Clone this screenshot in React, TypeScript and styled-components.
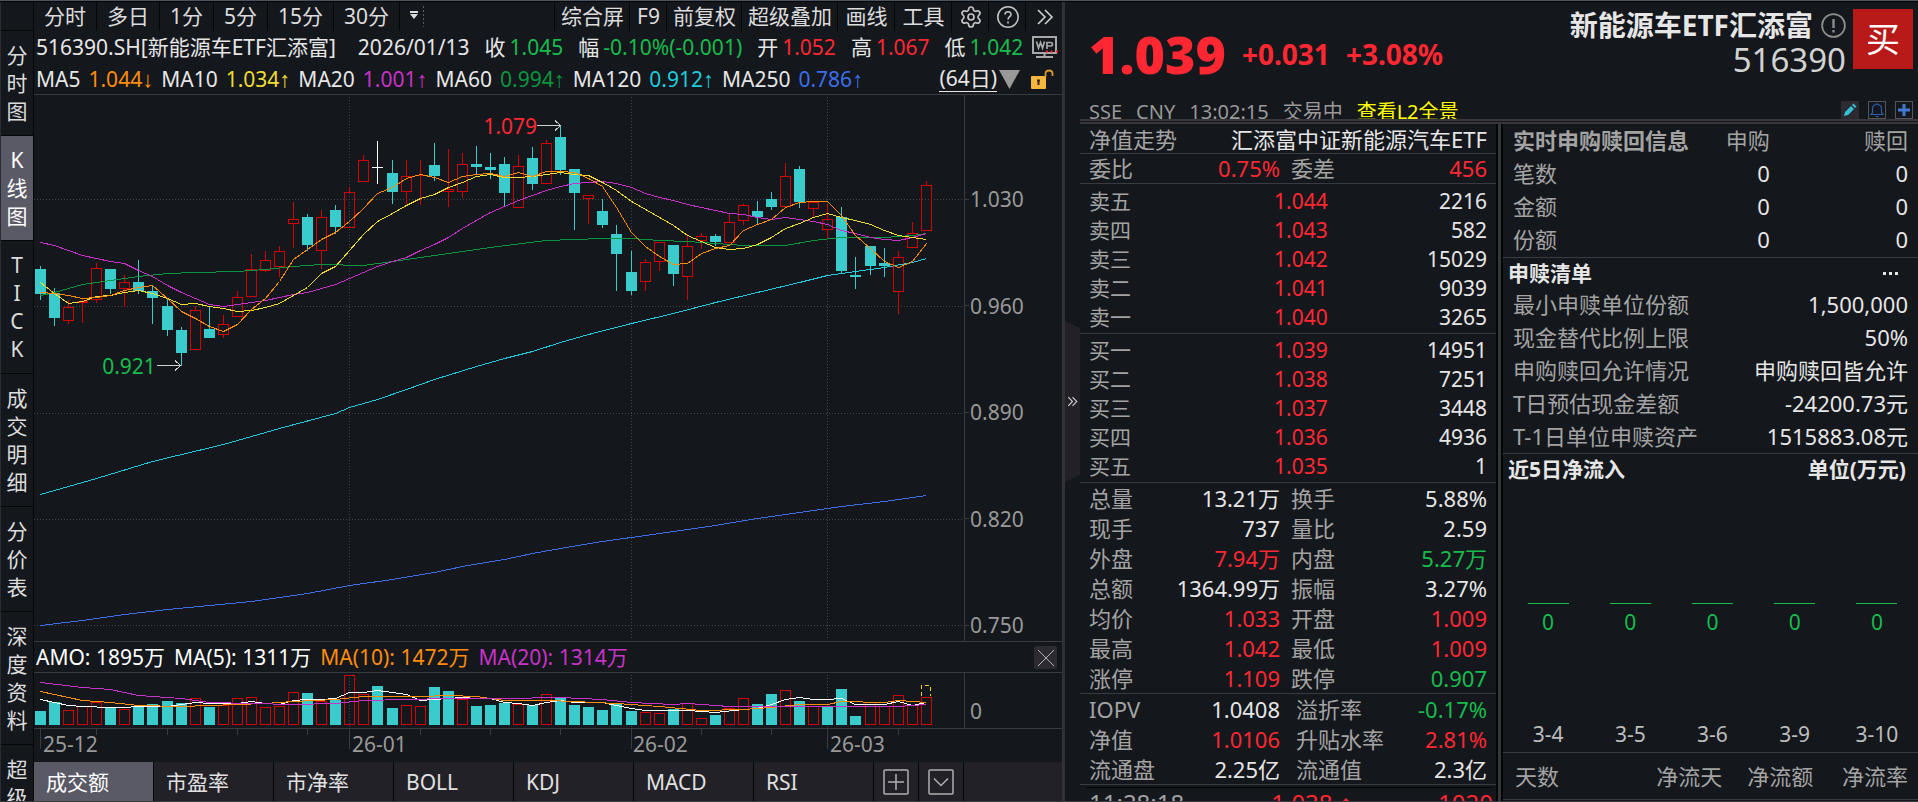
import React from 'react';
import styled, { createGlobalStyle, css } from 'styled-components';
import { Settings } from 'lucide-react';

const c = {
  bg: '#14171c',
  raised: '#232128',
  active: '#5a5966',
  line: '#3a3b40',
  black: '#050608',
  text: '#e6e6e6',
  muted: '#a3a3a3',
  dim: '#999999',
  red: '#ff2832',
  green: '#17bd4c',
  candleRed: '#d40000',
  cyan: '#3acccc',
  orange: '#ff8c0a',
  yellow: '#f0dc32',
  purple: '#c832c8',
  darkGreen: '#0a9640',
  aqua: '#1fcbdc',
  blue: '#3c6eec',
};

const GlobalStyle = createGlobalStyle`
  * { box-sizing: border-box; }
  body {
    margin: 0;
    background: ${c.bg};
    color: ${c.text};
    font: 400 21px/28px "Noto Sans", "Noto Sans CJK SC", sans-serif;
  }
  button, a { font: inherit; color: inherit; }
  button { margin: 0; padding: 0; border: 0; background: none; cursor: pointer; white-space: nowrap; }
  table { border-collapse: collapse; table-layout: fixed; width: 100%; }
  th, td { padding: 0; font-weight: 400; white-space: nowrap; }
  th { text-align: left; }
  h2 { margin: 0; font-size: inherit; }
`;

/* ---------- page frame ---------- */

const Page = styled.div`
  display: flex;
  flex-direction: column;
  height: 100vh;
  overflow: hidden;
  border-bottom: 1px solid ${c.line};
`;

const TopEdge = styled.div`
  flex: none;
  height: 2px;
  background: #4c555f;
  border-bottom: 1px solid ${c.black};
`;

const Workspace = styled.div`
  flex: 1;
  min-height: 0;
  display: grid;
  grid-template-columns: minmax(0, 1062fr) 18px minmax(0, 838fr);
  grid-template-rows: minmax(0, 1fr);
`;

const ChartSide = styled.main`
  display: grid;
  grid-template-columns: 34px minmax(0, 1fr);
  grid-template-rows: minmax(0, 1fr);
`;

const Nav = styled.nav`
  display: flex;
  flex-direction: column;
  overflow: hidden;
  padding-top: 28px;
  border-left: 1px solid #2a2c31;
  border-right: 1px solid ${c.black};
`;

const NavItem = styled.button<{ $active?: boolean }>`
  flex: none;
  display: flex;
  flex-direction: column;
  align-items: center;
  padding: 10px 0;
  border-top: 1px solid ${c.black};
  color: ${p => (p.$active ? '#ffffff' : '#dcdcdc')};
  background: ${p => (p.$active ? c.active : c.bg)};
`;

const ChartColumn = styled.div`
  display: flex;
  flex-direction: column;
  min-width: 0;
`;

/* ---------- toolbar ---------- */

const Toolbar = styled.div`
  flex: none;
  display: flex;
  height: 29px;
  color: #dcdcdc;
`;

const ToolGap = styled.div`
  flex: 1;
`;

const PeriodButton = styled.button`
  padding: 0 10px;
  border-right: 1px solid ${c.black};
  line-height: 27px;
`;

const ToolButton = styled.button<{ $wide?: boolean }>`
  min-width: ${p => (p.$wide ? 57 : 37)}px;
  padding: 0 5px 0 6px;
  border-left: 1px solid ${c.black};
  line-height: 27px;
  svg { display: block; margin: 0 auto; }
`;

const MoreButton = styled.button`
  padding: 0 0 2px 10px;
  svg { display: block; }
`;

/* ---------- readouts ---------- */

const InfoRow = styled.div`
  flex: none;
  display: flex;
  align-items: center;
  gap: 15px;
  height: 32px;
  padding: 0 4px 0 2px;
  white-space: nowrap;
  overflow: hidden;
`;

const AverageRow = styled(InfoRow)`
  gap: 8px;
  padding-top: 1px;
  padding-right: 8px;
  border-bottom: 1px solid ${c.line};
`;

const Security = styled.span`
  margin-right: 7px;
`;

const Value = styled.span<{ $color?: string }>`
  color: ${p => p.$color || c.text};
`;

const Readout = styled.span`
  display: flex;
  gap: 4px;
`;

const Average = styled.span`
  display: flex;
  gap: 8px;
`;

const Arrow = styled.span`
  font-family: "Liberation Sans", sans-serif;
  font-size: 22px;
`;

const RowEnd = styled.span`
  display: flex;
  align-items: center;
  gap: 2px;
  margin-left: auto;
`;

const DaysButton = styled.button`
  height: 26px;
  line-height: 25px;
  border-bottom: 1px solid ${c.text};
`;

const LockButton = styled.button`
  margin-left: 9px;
  svg { display: block; }
`;

const IconButton = styled.button`
  margin-left: -6px;
  svg { display: block; }
`;

/* ---------- chart ---------- */

const PlotArea = styled.section<{ $grow?: boolean }>`
  display: grid;
  grid-template-columns: minmax(0, 1fr) 98px;
  grid-template-rows: minmax(0, 1fr);
  ${p => (p.$grow ? css`flex: 1; min-height: 0;` : css`flex: none; height: 55px;`)}
`;

const Canvas = styled.div`
  position: relative;
  min-width: 0;
  svg { display: block; width: 100%; height: 100%; }
`;

const Extreme = styled.span<{ $right: string; $top: string; $color: string }>`
  position: absolute;
  right: ${p => p.$right};
  top: ${p => p.$top};
  margin-top: -14px;
  color: ${p => p.$color};
`;

const PriceAxis = styled.div`
  display: flex;
  flex-direction: column;
  justify-content: space-between;
  padding: 90px 0 2px;
  border-left: 1px solid ${c.line};
  color: ${c.dim};
`;

const PriceTick = styled.div`
  display: flex;
  align-items: center;
  gap: 1px;
  &::before { content: ''; width: 4px; height: 1px; background: ${c.line}; }
`;

const AmountAxis = styled.div`
  display: flex;
  align-items: center;
  padding: 20px 0 0 5px;
  border-left: 1px solid ${c.line};
  color: ${c.dim};
`;

const AmountBar = styled.div`
  flex: none;
  display: flex;
  align-items: center;
  gap: 9px;
  height: 32px;
  padding: 0 5px 0 2px;
  border: solid ${c.line};
  border-width: 1px 0;
  color: #ffffff;
  white-space: nowrap;
`;

const CloseButton = styled.button`
  width: 23px;
  height: 23px;
  margin-left: auto;
  border-radius: 2px;
  background: #2c2b31;
  svg { display: block; }
`;

const TimeAxis = styled.div`
  flex: none;
  height: 34px;
  border-top: 1px solid ${c.line};
  color: ${c.dim};
`;

const TimeTicks = styled.div`
  height: 20px;
  margin: 0 98px -20px 0;
  svg { display: block; width: 100%; height: 20px; }
`;

const TimeLabels = styled.div`
  display: grid;
  grid-template-columns: 309fr 281fr 197fr 232fr;
  padding: 1px 0 0 9px;
`;

const Tabs = styled.div`
  flex: none;
  display: flex;
  height: 39px;
  background: ${c.raised};
`;

const Tab = styled.button<{ $active?: boolean }>`
  flex: 0 1 120px;
  padding: 0 12px;
  border-right: 1px solid ${c.black};
  text-align: left;
  background: ${p => (p.$active ? c.active : 'transparent')};
  color: ${p => (p.$active ? '#ffffff' : '#e0e0e0')};
`;

const TabTool = styled.button`
  width: 45px;
  border-right: 1px solid ${c.black};
  svg { display: block; margin: 0 auto; }
`;

/* ---------- splitter ---------- */

const Splitter = styled.div`
  display: flex;
  align-items: center;
  border-left: 3px solid #313136;
`;

const Collapse = styled.button`
  width: 15px;
  height: 161px;
  background: ${c.raised};
  clip-path: polygon(0 0, 100% 7px, 100% 154px, 0 100%);
  svg { display: block; margin: 0 auto; }
`;

/* ---------- quote side ---------- */

const QuoteSide = styled.aside`
  display: flex;
  flex-direction: column;
  min-width: 0;
`;

const QuoteHead = styled.header`
  flex: none;
  display: flex;
  justify-content: space-between;
  height: 122px;
  overflow: hidden;
  border-bottom: 5px double #36363b;
  white-space: nowrap;
`;

const HeadLeft = styled.div`
  display: flex;
  flex-direction: column;
  justify-content: space-between;
  height: 124px;
  padding: 23px 0 0 9px;
`;

const PriceLine = styled.div`
  display: flex;
  align-items: center;
  gap: 16px;
  color: ${c.red};
  font-size: 28px;
  font-weight: 700;
`;

const Price = styled.strong`
  font-size: 52px;
  line-height: 58px;
`;

const StatusLine = styled.div`
  display: flex;
  gap: 14px;
  color: ${c.dim};
  font-size: 20px;
`;

const DepthLink = styled.a`
  color: #ffff00;
  text-decoration: none;
`;

const HeadRight = styled.div`
  display: flex;
  flex-direction: column;
  align-items: flex-end;
  justify-content: space-between;
  padding: 7px 5px 0 0;
`;

const Identity = styled.div`
  display: flex;
  gap: 7px;
`;

const Names = styled.div`
  display: flex;
  flex-direction: column;
  align-items: flex-end;
`;

const FundName = styled.h1`
  display: flex;
  align-items: center;
  gap: 8px;
  margin: 0;
  font-size: 28px;
  line-height: 32px;
`;

const FundCode = styled.div`
  color: #d2d2d2;
  font-size: 33px;
  line-height: 38px;
`;

const BuyButton = styled.button`
  width: 60px;
  height: 60px;
  background: #b81919;
  color: #ffffff;
  font-size: 34px;
`;

const HeadTools = styled.div`
  display: flex;
  gap: 9px;
`;

const SmallTool = styled.button<{ $plain?: boolean }>`
  width: 18px;
  height: 18px;
  border: 1px solid ${p => (p.$plain ? '#2c2b31' : '#55565a')};
  background: ${p => (p.$plain ? '#2c2b31' : 'transparent')};
  svg { display: block; }
`;

const QuoteBody = styled.div`
  flex: 1;
  min-height: 0;
  display: grid;
  grid-template-columns: minmax(0, 416fr) 7px minmax(0, 415fr);
  grid-template-rows: minmax(0, 1fr);
`;

const Divider = styled.div`
  border: solid ${c.black};
  border-width: 0 2px;
  background: #36363b;
`;

const Panel = styled.div`
  overflow: hidden;
  font-size: 22px;
`;

const Block = styled.section<{ $pad?: string }>`
  padding: ${p => p.$pad || '0 9px'};
  border-bottom: 1px solid ${c.line};
`;

const TrendRow = styled.div`
  display: flex;
  justify-content: space-between;
  height: 29px;
  line-height: 30px;
  white-space: nowrap;
`;

const Label = styled.span`
  color: ${c.muted};
`;

const StatTable = styled.table<{ $row: number; $inset: number; $size?: number }>`
  font-size: ${p => p.$size || 22}px;
  td, th { height: ${p => p.$row}px; line-height: ${p => p.$row}px; }
  th { color: ${c.muted}; }
  td { text-align: right; }
  td + th { padding-left: ${p => p.$inset}px; }
`;

const TradeRow = styled.div`
  display: grid;
  grid-template-columns: 6fr 7fr 7fr;
  margin: 2px 3px 0 6px;
  padding: 0 0 0 3px;
  border-top: 1px solid ${c.black};
  color: ${c.red};
  font-size: 24px;
  line-height: 30px;
`;

const Trade = styled.span`
  display: flex;
  align-items: center;
  justify-content: flex-end;
  gap: 7px;
`;

const SectionHead = styled.div`
  display: flex;
  justify-content: space-between;
  height: 30px;
  padding-left: 5px;
  line-height: 31px;
  font-size: 21px;
  font-weight: 700;
`;

const Unit = styled.span`
  padding-right: 12px;
`;

const DotsButton = styled.button`
  padding-right: 12px;
  svg { display: block; }
`;

const FlowChart = styled.div`
  display: grid;
  grid-template-columns: repeat(5, 1fr);
  padding: 119px 0 4px 4px;
`;

const FlowDay = styled.div`
  display: flex;
  flex-direction: column;
  align-items: center;
  gap: 84px;
  font-size: 21px;
  color: #bdbdbd;
`;

const FlowBar = styled.div`
  width: 50%;
  border-top: 1px solid ${c.green};
  padding-top: 4px;
  color: ${c.green};
  text-align: center;
`;

const FlowTable = styled.table`
  th { height: 46px; color: ${c.muted}; text-align: right; }
  th:first-child { text-align: left; padding-left: 2px; }
`;

/* ---------- data ---------- */

type Kind = 'c' | 'r' | 'w';

// Kind, high, body top, body bottom, low: thirds of a pixel below the window top.
const candles: [Kind, number, number, number, number][] = [
  ['c', 798, 807, 882, 900], ['c', 864, 880, 954, 978], ['r', 900, 922, 962, 972], ['r', 897, 902, 910, 969],
  ['r', 790, 805, 899, 908], ['c', 807, 807, 867, 882], ['r', 824, 846, 866, 921], ['c', 780, 846, 873, 882],
  ['c', 855, 873, 894, 972], ['c', 897, 918, 990, 1008], ['c', 981, 990, 1059, 1098], ['r', 918, 931, 1049, 1049],
  ['c', 918, 987, 1014, 1014], ['r', 945, 972, 1004, 1014], ['r', 873, 891, 950, 950], ['r', 762, 808, 890, 890],
  ['r', 753, 780, 812, 816], ['r', 738, 753, 802, 831], ['r', 606, 657, 671, 744], ['c', 642, 651, 735, 753],
  ['r', 630, 652, 752, 806], ['c', 615, 630, 681, 702], ['r', 561, 576, 683, 683], ['r', 465, 480, 545, 545],
  ['w', 423, 501, 504, 551], ['c', 480, 519, 576, 612], ['r', 480, 529, 575, 612], ['r', 480, 525, 528, 615],
  ['c', 429, 495, 528, 543], ['r', 447, 568, 575, 621], ['r', 459, 492, 575, 594], ['c', 438, 492, 501, 522],
  ['c', 459, 501, 510, 537], ['c', 471, 492, 579, 621], ['r', 465, 499, 623, 623], ['c', 441, 474, 552, 570],
  ['r', 420, 430, 551, 551], ['c', 375, 411, 510, 525], ['c', 507, 507, 579, 690], ['r', 586, 586, 597, 672],
  ['c', 597, 633, 675, 684], ['c', 675, 702, 762, 873], ['c', 753, 816, 873, 885], ['r', 777, 787, 845, 873],
  ['r', 727, 727, 785, 813], ['c', 735, 735, 822, 858], ['r', 703, 739, 830, 900], ['r', 699, 709, 724, 747],
  ['c', 702, 708, 726, 738], ['r', 642, 667, 728, 728], ['r', 612, 616, 664, 675], ['c', 603, 633, 651, 672],
  ['c', 576, 597, 621, 630], ['r', 489, 529, 620, 620], ['c', 498, 507, 606, 624], ['r', 607, 607, 628, 655],
  ['r', 612, 658, 689, 716], ['c', 621, 651, 813, 822], ['c', 771, 825, 831, 867], ['c', 738, 738, 798, 825],
  ['c', 744, 789, 798, 831], ['r', 753, 772, 875, 942], ['r', 666, 700, 743, 743], ['r', 543, 556, 692, 692],
];

const daily = (values: number[]) => values.map((v, i) => [i, v]);

const averages: { color: string; points: number[][] }[] = [
  { color: c.blue, points: [[0, 1874], [3, 1860], [6, 1843], [9, 1828], [12, 1816], [15, 1803], [19, 1778], [22, 1756], [25, 1736], [28, 1715], [30, 1698], [33, 1677], [35, 1658], [37, 1643], [40, 1622], [43, 1604], [46, 1586], [48, 1574], [51, 1553], [54, 1536], [57, 1518], [60, 1504], [63, 1486]] },
  { color: c.aqua, points: [[0, 1483], [4, 1435], [8, 1384], [13, 1333], [17, 1285], [21, 1238], [22, 1221], [24, 1196], [26, 1168], [28, 1137], [31, 1099], [33, 1075], [35, 1053], [37, 1026], [39, 1002], [42, 968], [45, 938], [48, 907], [51, 877], [54, 845], [56, 826], [58, 812], [60, 800], [62, 786], [63, 775]] },
  { color: c.darkGreen, points: [[0, 886], [1, 877], [3, 853], [4, 845], [7, 829], [9, 818], [11, 817], [14, 813], [16, 806], [18, 799], [20, 793], [23, 796], [25, 783], [28, 765], [32, 740], [36, 720], [40, 713], [42, 714], [44, 721], [46, 724], [48, 730], [50, 736], [53, 736], [55, 721], [57, 712], [60, 711], [62, 705], [63, 698]] },
  { color: c.purple, points: daily([727, 736, 751, 766, 775, 784, 790, 810, 829, 856, 876, 894, 912, 917, 911, 907, 899, 891, 881, 876, 865, 852, 835, 815, 799, 783, 770, 751, 732, 712, 683, 661, 637, 617, 600, 584, 570, 557, 550, 545, 544, 548, 562, 580, 591, 601, 612, 622, 631, 638, 643, 650, 656, 652, 658, 662, 672, 689, 699, 711, 718, 719, 712, 698]) },
  { color: c.yellow, points: daily([845, 878, 908, 903, 887, 884, 875, 871, 878, 895, 913, 910, 919, 925, 934, 929, 921, 909, 886, 862, 820, 797, 750, 703, 663, 639, 616, 593, 581, 562, 547, 529, 523, 532, 532, 529, 521, 517, 522, 524, 546, 571, 603, 627, 651, 676, 704, 724, 742, 748, 743, 733, 711, 684, 668, 650, 640, 651, 660, 673, 691, 704, 711, 716]) },
  { color: c.orange, points: daily([875, 880, 885, 895, 892, 886, 869, 860, 856, 893, 933, 953, 979, 993, 972, 927, 895, 843, 778, 748, 717, 696, 662, 625, 578, 562, 533, 523, 531, 547, 529, 522, 520, 529, 517, 527, 514, 514, 515, 533, 557, 622, 697, 737, 768, 793, 790, 758, 744, 734, 691, 672, 657, 621, 606, 604, 604, 645, 706, 745, 782, 801, 782, 730]) },
];

const amountTops = [933, 906, 931, 919, 906, 924, 928, 919, 912, 903, 910, 895, 921, 915, 895, 891, 921, 918, 877, 879, 903, 899, 826, 883, 858, 924, 916, 919, 861, 873, 897, 918, 915, 909, 912, 915, 883, 893, 915, 921, 930, 910, 933, 937, 939, 927, 910, 955, 945, 925, 895, 912, 883, 871, 903, 917, 921, 867, 948, 906, 919, 886, 915, 892];

// Days whose turnover bar is filled although the candle is not, and the reverse.
const amountDown = new Set([24, 29, 39, 56]);
const amountUp = new Set([59, 60]);

const amountLines: { color: string; points: number[][] }[] = [
  { color: '#ffffff', points: [[0, 898], [1, 905], [2, 915], [3, 919], [5, 920], [6, 922], [7, 919], [9, 918], [10, 913], [11, 907], [12, 910], [14, 910], [15, 904], [16, 910], [17, 911], [18, 901], [19, 898], [20, 898], [21, 895], [22, 875], [23, 877], [24, 871], [25, 877], [26, 883], [27, 901], [28, 896], [29, 895], [30, 891], [31, 893], [32, 893], [33, 905], [34, 910], [35, 914], [36, 906], [37, 901], [38, 906], [40, 907], [41, 915], [42, 923], [43, 931], [46, 931], [48, 937], [50, 926], [51, 925], [52, 912], [53, 896], [54, 891], [55, 898], [56, 898], [57, 894], [58, 913], [60, 913], [61, 904], [62, 916], [63, 905]] },
  { color: c.orange, points: [[0, 874], [1, 881], [3, 901], [5, 907], [7, 916], [10, 918], [14, 913], [16, 910], [18, 904], [21, 898], [23, 887], [25, 889], [27, 889], [29, 886], [31, 887], [33, 901], [36, 900], [38, 904], [41, 910], [44, 918], [47, 930], [50, 927], [52, 922], [54, 913], [56, 911], [57, 904], [60, 905], [61, 901], [63, 907]] },
  { color: c.purple, points: [[0, 847], [3, 862], [5, 867], [7, 885], [10, 895], [12, 905], [15, 910], [18, 913], [21, 908], [23, 900], [26, 898], [29, 895], [33, 895], [37, 892], [40, 898], [42, 905], [45, 913], [46, 910], [49, 919], [53, 918], [57, 918], [61, 917], [63, 913]] },
];

const dayX = (i: number) => Math.round(6 + i * 14.06);
const priceY = (v: number) => Math.round(v / 3) - 95;
const amountY = (v: number) => Math.round(v / 3) - 273;
const toPoints = (points: number[][], y: (v: number) => number) =>
  points.map(([i, v]) => `${dayX(i) + 0.5},${y(v) + 0.5}`).join(' ');
const monthStarts = [22, 42, 56];
const weekTicks = [4, 9, 14, 19, 27, 32, 37, 47, 52, 61];

/* ---------- chart pieces ---------- */

function CandleChart() {
  return (
    <svg viewBox="0 0 930 546" preserveAspectRatio="none" shapeRendering="crispEdges" fill="none" aria-hidden="true">
      {[104, 211, 318, 424, 530].map(y => (
        <path key={y} d={`M0 ${y + 0.5}H930`} stroke="#43454a" strokeDasharray="1 2" />
      ))}
      {monthStarts.map(i => (
        <path key={i} d={`M${dayX(i) + 0.5} 2V544`} stroke="#43454a" strokeDasharray="1 2" />
      ))}
      {candles.map(([kind, high, top, bottom, low], i) => {
        const x = dayX(i);
        const t = priceY(top);
        const b = Math.max(priceY(bottom), t + 1);
        const stroke = kind === 'c' ? c.cyan : kind === 'r' ? c.candleRed : '#ffffff';
        return (
          <g key={i} stroke={stroke}>
            <path d={`M${x + 0.5} ${priceY(high)}V${t}M${x + 0.5} ${b}V${priceY(low)}`} />
            {kind === 'r' && b - t > 1 ? (
              <rect x={x - 4.5} y={t + 0.5} width={10} height={b - t - 1} />
            ) : (
              <rect x={x - 5} y={t} width={11} height={b - t} fill={stroke} stroke="none" />
            )}
          </g>
        );
      })}
      {averages.map(a => (
        <polyline key={a.color} points={toPoints(a.points, priceY)} stroke={a.color} />
      ))}
      <path d="M503 30.5H526M521 25.5L526.5 30.5L521 35.5M123 270.5H146M141 265.5L146.5 270.5L141 275.5" stroke="#d0d0d0" />
    </svg>
  );
}

function AmountChart() {
  return (
    <svg viewBox="0 0 930 55" preserveAspectRatio="none" shapeRendering="crispEdges" fill="none" aria-hidden="true">
      {monthStarts.map(i => (
        <path key={i} d={`M${dayX(i) + 0.5} 2V54`} stroke="#43454a" strokeDasharray="1 2" />
      ))}
      {amountTops.map((top, i) => {
        const x = dayX(i);
        const t = amountY(top);
        const filled = (candles[i][0] === 'c' && !amountUp.has(i)) || amountDown.has(i);
        return filled ? (
          <rect key={i} x={x - 5} y={t} width={11} height={52 - t} fill={c.cyan} />
        ) : (
          <rect key={i} x={x - 4.5} y={t + 0.5} width={10} height={51 - t} stroke={c.candleRed} />
        );
      })}
      <path d="M887.5 23V12.5H896.5V23" stroke="#ffc81e" strokeDasharray="4 3" />
      {amountLines.map(a => (
        <polyline key={a.color} points={toPoints(a.points, amountY)} stroke={a.color} />
      ))}
    </svg>
  );
}

/* ---------- icons ---------- */

const Chevrons = ({ size }: { size: number }) => (
  <svg width={size} height={size} viewBox="0 0 18 18" fill="none" stroke="#d0d0d0" strokeWidth={size > 12 ? 1.6 : 1.8}>
    <path d="M2 2L9 9L2 16M9 2L16 9L9 16" />
  </svg>
);

const HelpIcon = () => (
  <svg width="24" height="24" viewBox="0 0 24 24" fill="none" stroke="#c4c4c4" strokeWidth="1.6">
    <circle cx="12" cy="12" r="10.2" />
    <path d="M9 9.6C9 5.8 15 5.8 15 9.4C15 11.6 12 11.8 12 14.4M12 16.4V18.4" />
  </svg>
);

const TerminalIcon = () => (
  <svg width="27" height="24" viewBox="0 0 27 24" fill="none" stroke="#a8a8a8" strokeWidth="2">
    <path d="M1 2H24V18H1ZM12.5 18V21M4 22H21" />
    <path d="M4.5 6.5L6.5 13L8.5 7.5L10.5 13L12.5 6.5M15 14V7.5H18.5Q20.5 7.5 20.5 9.3T18.5 11H15" strokeWidth="1.7" />
    <path d="M14 16.5H16M18.5 16.5H20.5M24 16.5H26" stroke="#ff1e28" />
  </svg>
);

const LockIcon = () => (
  <svg width="23" height="21" viewBox="0 0 23 21" fill="none">
    <rect x="0" y="7" width="15" height="13" rx="1" fill="#f4b63f" />
    <path d="M14.5 8V4.5Q14.5 1.5 18 1.5T21.5 4.5V7" stroke="#d8962a" strokeWidth="1.8" />
    <path d="M7.5 11V16M6 11.5H9" stroke="#3a2a08" strokeWidth="2" />
  </svg>
);

/* ---------- sections ---------- */

const navItems = ['分时图', 'K线图', 'TICK', '成交明细', '分价表', '深度资料', '超级复盘'];
const tabs = ['成交额', '市盈率', '市净率', 'BOLL', 'KDJ', 'MACD', 'RSI'];

const readouts: [string, string, string][] = [
  ['收', '1.045', c.green], ['幅', '-0.10%(-0.001)', c.green], ['开', '1.052', c.red], ['高', '1.067', c.red], ['低', '1.042', c.green],
];

const maReadouts: [string, string, string, string][] = [
  ['MA5', '1.044', '↓', c.orange], ['MA10', '1.034', '↑', c.yellow], ['MA20', '1.001', '↑', c.purple],
  ['MA60', '0.994', '↑', c.darkGreen], ['MA120', '0.912', '↑', c.aqua], ['MA250', '0.786', '↑', c.blue],
];

const asks = [['卖五', '1.044', '2216'], ['卖四', '1.043', '582'], ['卖三', '1.042', '15029'], ['卖二', '1.041', '9039'], ['卖一', '1.040', '3265']];
const bids = [['买一', '1.039', '14951'], ['买二', '1.038', '7251'], ['买三', '1.037', '3448'], ['买四', '1.036', '4936'], ['买五', '1.035', '1']];

type Stat = [string, string, string, string, string?, string?];
const ratio: Stat[] = [['委比', '0.75%', '委差', '456', c.red, c.red]];
const stats: Stat[] = [
  ['总量', '13.21万', '换手', '5.88%'],
  ['现手', '737', '量比', '2.59'],
  ['外盘', '7.94万', '内盘', '5.27万', c.red, c.green],
  ['总额', '1364.99万', '振幅', '3.27%'],
  ['均价', '1.033', '开盘', '1.009', c.red, c.red],
  ['最高', '1.042', '最低', '1.009', c.red, c.red],
  ['涨停', '1.109', '跌停', '0.907', c.red, c.green],
];
const fundStats: Stat[] = [
  ['IOPV', '1.0408', '溢折率', '-0.17%', c.text, c.green],
  ['净值', '1.0106', '升贴水率', '2.81%', c.red, c.red],
  ['流通盘', '2.25亿', '流通值', '2.3亿'],
];

const terms = [
  ['最小申赎单位份额', '1,500,000'], ['现金替代比例上限', '50%'], ['申购赎回允许情况', '申购赎回皆允许'],
  ['T日预估现金差额', '-24200.73元'], ['T-1日单位申赎资产', '1515883.08元'],
];

function BookTable({ rows }: { rows: string[][] }) {
  return (
    <StatTable $row={29} $inset={0} $size={21}>
      <colgroup><col width="30%" /><col width="30%" /><col width="40%" /></colgroup>
      <tbody>
        {rows.map(([level, price, volume]) => (
          <tr key={level}>
            <th scope="row">{level}</th>
            <td><Value $color={c.red}>{price}</Value></td>
            <td>{volume}</td>
          </tr>
        ))}
      </tbody>
    </StatTable>
  );
}

function Stats({ rows, row = 30, inset = 11 }: { rows: Stat[]; row?: number; inset?: number }) {
  return (
    <StatTable $row={row} $inset={inset}>
      <colgroup><col width="20%" /><col width="28%" /><col width="28%" /><col width="24%" /></colgroup>
      <tbody>
        {rows.map(([a, av, b, bv, ac, bc]) => (
          <tr key={a}>
            <th scope="row">{a}</th>
            <td><Value $color={ac}>{av}</Value></td>
            <th scope="row">{b}</th>
            <td><Value $color={bc}>{bv}</Value></td>
          </tr>
        ))}
      </tbody>
    </StatTable>
  );
}

function ChartPane() {
  return (
    <ChartColumn>
      <Toolbar>
        {['分时', '多日', '1分', '5分', '15分', '30分'].map(t => <PeriodButton key={t}>{t}</PeriodButton>)}
        <MoreButton aria-label="更多周期">
          <svg width="14" height="22" viewBox="0 0 14 22" fill="#dcdcdc">
            <path d="M0 6H8V8H0ZM0 9H8L4 14Z" />
            <path d="M13.5 1V22" stroke="#5a5c60" strokeDasharray="2 2" />
          </svg>
        </MoreButton>
        <ToolGap />
        <ToolButton>综合屏</ToolButton>
        <ToolButton>F9</ToolButton>
        <ToolButton>前复权</ToolButton>
        <ToolButton>超级叠加</ToolButton>
        <ToolButton $wide>画线</ToolButton>
        <ToolButton $wide>工具</ToolButton>
        <ToolButton aria-label="设置"><Settings size={24} color="#c4c4c4" strokeWidth={1.7} /></ToolButton>
        <ToolButton aria-label="帮助"><HelpIcon /></ToolButton>
        <ToolButton aria-label="展开"><Chevrons size={18} /></ToolButton>
      </Toolbar>
      <InfoRow>
        <Security>516390.SH[新能源车ETF汇添富]</Security>
        <Value>2026/01/13</Value>
        {readouts.map(([label, value, color]) => (
          <Readout key={label}>{label}<Value $color={color}>{value}</Value></Readout>
        ))}
        <RowEnd><IconButton aria-label="WP"><TerminalIcon /></IconButton></RowEnd>
      </InfoRow>
      <AverageRow>
        {maReadouts.map(([label, value, arrow, color]) => (
          <Average key={label}>{label}<Value $color={color}>{value}<Arrow>{arrow}</Arrow></Value></Average>
        ))}
        <RowEnd>
          <DaysButton>(64日)</DaysButton>
          <svg width="21" height="19" viewBox="0 0 21 19" fill="#999999"><path d="M0 0H21L10.5 19Z" /></svg>
          <LockButton aria-label="锁定"><LockIcon /></LockButton>
        </RowEnd>
      </AverageRow>
      <PlotArea $grow>
        <Canvas>
          <CandleChart />
          <Extreme $right="45.9%" $top="5.6%" $color={c.red}>1.079</Extreme>
          <Extreme $right="86.9%" $top="49.6%" $color={c.green}>0.921</Extreme>
        </Canvas>
        <PriceAxis>
          {['1.030', '0.960', '0.890', '0.820', '0.750'].map(p => <PriceTick key={p}>{p}</PriceTick>)}
        </PriceAxis>
      </PlotArea>
      <AmountBar>
        <span>AMO: 1895万</span>
        <span>MA(5): 1311万</span>
        <Value $color={c.orange}>MA(10): 1472万</Value>
        <Value $color={c.purple}>MA(20): 1314万</Value>
        <CloseButton aria-label="关闭">
          <svg width="23" height="23" viewBox="0 0 23 23" stroke="#b4b4b4"><path d="M4 4L20 20M20 4L4 20" /></svg>
        </CloseButton>
      </AmountBar>
      <PlotArea>
        <Canvas><AmountChart /></Canvas>
        <AmountAxis>0</AmountAxis>
      </PlotArea>
      <TimeAxis>
        <TimeTicks>
          <svg viewBox="0 0 930 20" preserveAspectRatio="none" shapeRendering="crispEdges" stroke={c.line} aria-hidden="true">
            {[0, ...monthStarts].map(i => <path key={i} d={`M${dayX(i) + 0.5} 0V20`} />)}
            {weekTicks.map(i => <path key={i} d={`M${dayX(i) + 0.5} 0V6`} />)}
          </svg>
        </TimeTicks>
        <TimeLabels>
          {['25-12', '26-01', '26-02', '26-03'].map(m => <span key={m}>{m}</span>)}
        </TimeLabels>
      </TimeAxis>
      <Tabs>
        {tabs.map((t, i) => <Tab key={t} $active={i === 0}>{t}</Tab>)}
        <TabTool aria-label="添加指标">
          <svg width="26" height="26" viewBox="0 0 26 26" fill="none" stroke="#b0b0b0" strokeWidth="1.5">
            <rect x="1" y="1" width="24" height="24" rx="1" /><path d="M5 13H21M13 5V21" />
          </svg>
        </TabTool>
        <TabTool aria-label="更多指标">
          <svg width="26" height="26" viewBox="0 0 26 26" fill="none" stroke="#b0b0b0" strokeWidth="1.5">
            <rect x="1" y="1" width="24" height="24" rx="1" /><path d="M6 9.5L13 16.5L20 9.5" />
          </svg>
        </TabTool>
      </Tabs>
    </ChartColumn>
  );
}

export default function App() {
  return (
    <Page>
      <GlobalStyle />
      <TopEdge />
      <Workspace>
        <ChartSide>
          <Nav>
            {navItems.map((item, i) => (
              <NavItem key={item} $active={i === 1}>
                {[...item].map((ch, n) => <span key={n}>{ch}</span>)}
              </NavItem>
            ))}
          </Nav>
          <ChartPane />
        </ChartSide>
        <Splitter>
          <Collapse aria-label="收起"><Chevrons size={11} /></Collapse>
        </Splitter>
        <QuoteSide>
          <QuoteHead>
            <HeadLeft>
              <PriceLine><Price>1.039</Price><span>+0.031</span><span>+3.08%</span></PriceLine>
              <StatusLine>
                <span>SSE</span><span>CNY</span><span>13:02:15</span><span>交易中</span>
                <DepthLink href="#depth">查看L2全景</DepthLink>
              </StatusLine>
            </HeadLeft>
            <HeadRight>
              <Identity>
                <Names>
                  <FundName>
                    新能源车ETF汇添富
                    <svg width="25" height="25" viewBox="0 0 25 25" fill="none" stroke="#8c8c8c" strokeWidth="1.8">
                      <circle cx="12.5" cy="12.5" r="11.4" /><path d="M12.5 6V15M12.5 17V19.5" strokeWidth="2.4" />
                    </svg>
                  </FundName>
                  <FundCode>516390</FundCode>
                </Names>
                <BuyButton>买</BuyButton>
              </Identity>
              <HeadTools>
                <SmallTool $plain aria-label="编辑">
                  <svg width="16" height="16" viewBox="0 0 16 16" fill="#36c0d8">
                    <path d="M2 14L3 10L9 4L12 7L6 13ZM10 3L11.5 1.5L14.5 4.5L13 6Z" />
                  </svg>
                </SmallTool>
                <SmallTool aria-label="提醒">
                  <svg width="16" height="16" viewBox="0 0 16 16" fill="none" stroke="#2c5fae" strokeWidth="1.2">
                    <path d="M8 1V2.5M2 12.5H14L12.5 10.5V7Q12.5 2.5 8 2.5T3.5 7V10.5ZM6.5 14.5H9.5" />
                  </svg>
                </SmallTool>
                <SmallTool aria-label="加自选">
                  <svg width="16" height="16" viewBox="0 0 16 16" stroke="#3f7ad0" strokeWidth="3"><path d="M2 8H14M8 2V14" /></svg>
                </SmallTool>
              </HeadTools>
            </HeadRight>
          </QuoteHead>
          <QuoteBody>
            <Panel>
              <Block>
                <TrendRow><Label>净值走势</Label><span>汇添富中证新能源汽车ETF</span></TrendRow>
              </Block>
              <Block><Stats rows={ratio} row={29} /></Block>
              <Block $pad="3px 9px 1px"><BookTable rows={asks} /></Block>
              <Block $pad="2px 9px 1px"><BookTable rows={bids} /></Block>
              <Block><Stats rows={stats} /></Block>
              <Block><Stats rows={fundStats} inset={16} /></Block>
              <TradeRow>
                <Label>11:28:18</Label>
                <Trade>1.038<svg width="12" height="12" viewBox="0 0 12 12" fill={c.red}><path d="M6 1L12 7H0Z" /></svg></Trade>
                <Trade>1020</Trade>
              </TradeRow>
            </Panel>
            <Divider />
            <Panel>
              <Block $pad="0 10px 1px">
                <StatTable $row={33} $inset={0}>
                  <colgroup><col width="45%" /><col width="20%" /><col width="35%" /></colgroup>
                  <thead>
                    <tr>
                      <th scope="col"><b>实时申购赎回信息</b></th>
                      <td><Label>申购</Label></td>
                      <td><Label>赎回</Label></td>
                    </tr>
                  </thead>
                  <tbody>
                    {['笔数', '金额', '份额'].map(r => (
                      <tr key={r}><th scope="row">{r}</th><td>0</td><td>0</td></tr>
                    ))}
                  </tbody>
                </StatTable>
              </Block>
              <SectionHead>
                <h2>申赎清单</h2>
                <DotsButton aria-label="更多">
                  <svg width="23" height="3" viewBox="0 0 23 3" fill="#e6e6e6"><path d="M0 0H3V3H0ZM6 0H9V3H6ZM12 0H15V3H12Z" /></svg>
                </DotsButton>
              </SectionHead>
              <Block $pad="0 10px">
                <StatTable $row={33} $inset={0}>
                  <colgroup><col width="50%" /><col width="50%" /></colgroup>
                  <tbody>
                    {terms.map(([k, v]) => <tr key={k}><th scope="row">{k}</th><td>{v}</td></tr>)}
                  </tbody>
                </StatTable>
              </Block>
              <Block $pad="0">
                <SectionHead><h2>近5日净流入</h2><Unit>单位(万元)</Unit></SectionHead>
                <FlowChart>
                  {['3-4', '3-5', '3-6', '3-9', '3-10'].map(d => (
                    <FlowDay key={d}><FlowBar>0</FlowBar><span>{d}</span></FlowDay>
                  ))}
                </FlowChart>
              </Block>
              <Block $pad="0 10px">
                <FlowTable>
                  <colgroup><col width="20%" /><col width="33%" /><col width="23%" /><col width="24%" /></colgroup>
                  <thead>
                    <tr><th scope="col">天数</th><th scope="col">净流天</th><th scope="col">净流额</th><th scope="col">净流率</th></tr>
                  </thead>
                </FlowTable>
              </Block>
            </Panel>
          </QuoteBody>
        </QuoteSide>
      </Workspace>
    </Page>
  );
}
